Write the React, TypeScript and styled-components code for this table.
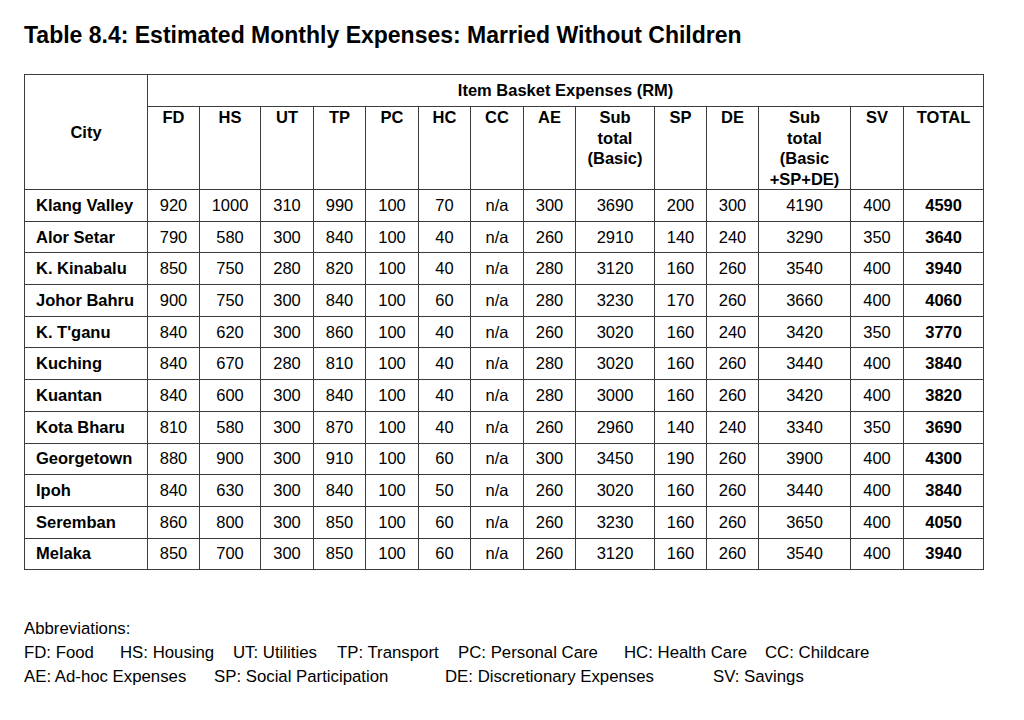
import React from "react";
import styled, { createGlobalStyle } from "styled-components";

const GlobalStyle = createGlobalStyle`
  html, body { margin: 0; padding: 0; background: #ffffff; }
  body { font-family: "Liberation Sans", Arial, Helvetica, sans-serif; color: #000; }
`;

const Page = styled.div`
  width: 1024px;
  height: 720px;
  box-sizing: border-box;
  padding: 22px 0 0 24px;
  display: flex;
  flex-direction: column;
  align-items: flex-start;
`;

const Title = styled.h1`
  margin: 0;
  font-size: 23px;
  font-weight: 700;
  line-height: 26px;
  color: #000;
  letter-spacing: 0;
`;

const Table = styled.table`
  margin-top: 26px;
  border-collapse: collapse;
  table-layout: fixed;
  width: 959px;
  font-size: 16.5px;
  color: #000;
`;

const HeadCell = styled.th<{ $top?: boolean }>`
  border: 1px solid #3c3c3c;
  font-weight: 700;
  text-align: center;
  vertical-align: ${(p) => (p.$top ? "top" : "middle")};
  padding: 0;
  line-height: 20.5px;
  box-sizing: border-box;
`;

const GroupRow = styled.tr`
  height: 32px;
`;

const SubHeadRow = styled.tr`
  height: 83px;
`;

const DataRow = styled.tr`
  height: 31.7px;
`;

const CityCell = styled.td`
  border: 1px solid #3c3c3c;
  font-weight: 700;
  text-align: left;
  padding: 0 0 0 11px;
  white-space: nowrap;
`;

const NumCell = styled.td<{ $bold?: boolean }>`
  border: 1px solid #3c3c3c;
  text-align: center;
  padding: 0;
  font-weight: ${(p) => (p.$bold ? 700 : 400)};
`;

const Notes = styled.div`
  margin-top: 47px;
  font-size: 16.8px;
  line-height: 24px;
  display: flex;
  flex-direction: column;
`;

const NoteLine = styled.div`
  display: flex;
  white-space: nowrap;
`;

const NoteItem = styled.span<{ $w?: number }>`
  display: inline-block;
  width: ${(p) => (p.$w ? `${p.$w}px` : "auto")};
  flex: none;
`;

const colWidths = [123, 52, 61, 53, 52, 53, 52, 53, 52, 79, 52, 52, 92, 53, 80];

const headers: React.ReactNode[] = [
  "FD",
  "HS",
  "UT",
  "TP",
  "PC",
  "HC",
  "CC",
  "AE",
  <>Sub<br />total<br />(Basic)</>,
  "SP",
  "DE",
  <>Sub<br />total<br />(Basic<br />+SP+DE)</>,
  "SV",
  "TOTAL",
];

const rows: [string, ...string[]][] = [
  ["Klang Valley", "920", "1000", "310", "990", "100", "70", "n/a", "300", "3690", "200", "300", "4190", "400", "4590"],
  ["Alor Setar", "790", "580", "300", "840", "100", "40", "n/a", "260", "2910", "140", "240", "3290", "350", "3640"],
  ["K. Kinabalu", "850", "750", "280", "820", "100", "40", "n/a", "280", "3120", "160", "260", "3540", "400", "3940"],
  ["Johor Bahru", "900", "750", "300", "840", "100", "60", "n/a", "280", "3230", "170", "260", "3660", "400", "4060"],
  ["K. T'ganu", "840", "620", "300", "860", "100", "40", "n/a", "260", "3020", "160", "240", "3420", "350", "3770"],
  ["Kuching", "840", "670", "280", "810", "100", "40", "n/a", "280", "3020", "160", "260", "3440", "400", "3840"],
  ["Kuantan", "840", "600", "300", "840", "100", "40", "n/a", "280", "3000", "160", "260", "3420", "400", "3820"],
  ["Kota Bharu", "810", "580", "300", "870", "100", "40", "n/a", "260", "2960", "140", "240", "3340", "350", "3690"],
  ["Georgetown", "880", "900", "300", "910", "100", "60", "n/a", "300", "3450", "190", "260", "3900", "400", "4300"],
  ["Ipoh", "840", "630", "300", "840", "100", "50", "n/a", "260", "3020", "160", "260", "3440", "400", "3840"],
  ["Seremban", "860", "800", "300", "850", "100", "60", "n/a", "260", "3230", "160", "260", "3650", "400", "4050"],
  ["Melaka", "850", "700", "300", "850", "100", "60", "n/a", "260", "3120", "160", "260", "3540", "400", "3940"],
];

const line1: [string, number?][] = [
  ["FD: Food", 96],
  ["HS: Housing", 113],
  ["UT: Utilities", 104],
  ["TP: Transport", 121],
  ["PC: Personal Care", 166],
  ["HC: Health Care", 141],
  ["CC: Childcare"],
];

const line2: [string, number?][] = [
  ["AE: Ad-hoc Expenses", 190],
  ["SP: Social Participation", 231],
  ["DE: Discretionary Expenses", 268],
  ["SV: Savings"],
];

export default function App() {
  return (
    <>
      <GlobalStyle />
      <Page>
        <Title>Table 8.4: Estimated Monthly Expenses: Married Without Children</Title>
        <Table>
          <colgroup>
            {colWidths.map((w, i) => (
              <col key={i} style={{ width: w }} />
            ))}
          </colgroup>
          <thead>
            <GroupRow>
              <HeadCell rowSpan={2}>City</HeadCell>
              <HeadCell colSpan={14}>Item Basket Expenses (RM)</HeadCell>
            </GroupRow>
            <SubHeadRow>
              {headers.map((h, i) => (
                <HeadCell key={i} $top>
                  {h}
                </HeadCell>
              ))}
            </SubHeadRow>
          </thead>
          <tbody>
            {rows.map(([city, ...vals]) => (
              <DataRow key={city}>
                <CityCell>{city}</CityCell>
                {vals.map((v, i) => (
                  <NumCell key={i} $bold={i === vals.length - 1}>
                    {v}
                  </NumCell>
                ))}
              </DataRow>
            ))}
          </tbody>
        </Table>
        <Notes>
          <div>Abbreviations:</div>
          <NoteLine>
            {line1.map(([t, w]) => (
              <NoteItem key={t} $w={w}>
                {t}
              </NoteItem>
            ))}
          </NoteLine>
          <NoteLine>
            {line2.map(([t, w]) => (
              <NoteItem key={t} $w={w}>
                {t}
              </NoteItem>
            ))}
          </NoteLine>
        </Notes>
      </Page>
    </>
  );
}
